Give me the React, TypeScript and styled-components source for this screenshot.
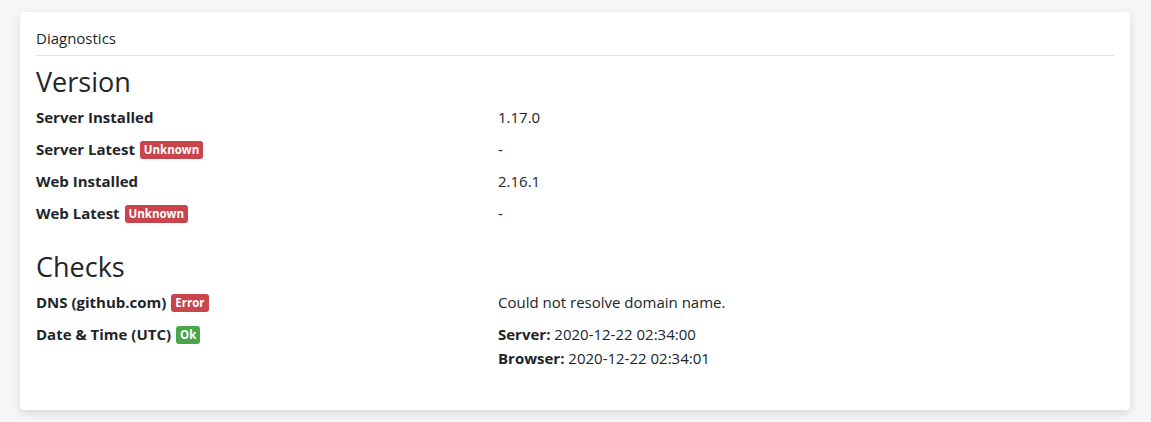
import React from 'react';
import styled, { createGlobalStyle } from 'styled-components';

const GlobalStyle = createGlobalStyle`
  html, body {
    margin: 0;
    padding: 0;
    background: #f5f6f8;
    font-family: "Open Sans", "Noto Sans", sans-serif;
    color: #212529;
  }
`;

const Page = styled.div`
  padding: 12px 21px 12px 20px;
`;

const Card = styled.div`
  background: #fff;
  border-radius: 4px;
  box-shadow: 0 3px 10px rgba(0, 0, 0, 0.12);
  padding: 0 16px 32px;
`;

const CardHeader = styled.div`
  font-size: 15px;
  line-height: 20px;
  padding: 16px 0 7px;
  border-bottom: 1px solid #dee2e6;
`;

const SectionTitle = styled.h2`
  font-size: 27px;
  font-weight: 500;
  margin: 10px 0 7px;
  line-height: 32px;
`;

const Spacer = styled.div`
  height: 8px;
`;

const Row = styled.div`
  display: grid;
  grid-template-columns: 462px 1fr;
  font-size: 15px;
  line-height: 24px;
  margin-bottom: 8px;
`;

const Label = styled.div`
  font-weight: 700;
`;

const Value = styled.div``;

const Strong = styled.span`
  font-weight: 700;
`;

const Badge = styled.span<{ $tone: 'danger' | 'success' }>`
  display: inline-block;
  background: ${({ $tone }) => ($tone === 'danger' ? '#c8454b' : '#4aa648')};
  color: #fff;
  font-size: 11.5px;
  font-weight: 700;
  line-height: 1;
  padding: 3px 4px;
  border-radius: 3px;
  vertical-align: 1px;
  margin-left: 1px;
`;

export default function App() {
  return (
    <>
      <GlobalStyle />
      <Page>
        <Card>
          <CardHeader>Diagnostics</CardHeader>
          <SectionTitle>Version</SectionTitle>
          <Row>
            <Label>Server Installed</Label>
            <Value>1.17.0</Value>
          </Row>
          <Row>
            <Label>
              Server Latest <Badge $tone="danger">Unknown</Badge>
            </Label>
            <Value>-</Value>
          </Row>
          <Row>
            <Label>Web Installed</Label>
            <Value>2.16.1</Value>
          </Row>
          <Row>
            <Label>
              Web Latest <Badge $tone="danger">Unknown</Badge>
            </Label>
            <Value>-</Value>
          </Row>
          <Spacer />
          <SectionTitle>Checks</SectionTitle>
          <Row>
            <Label>
              DNS (github.com) <Badge $tone="danger">Error</Badge>
            </Label>
            <Value>Could not resolve domain name.</Value>
          </Row>
          <Row>
            <Label>
              Date &amp; Time (UTC) <Badge $tone="success">Ok</Badge>
            </Label>
            <Value>
              <div>
                <Strong>Server:</Strong> 2020-12-22 02:34:00
              </div>
              <div>
                <Strong>Browser:</Strong> 2020-12-22 02:34:01
              </div>
            </Value>
          </Row>
        </Card>
      </Page>
    </>
  );
}
